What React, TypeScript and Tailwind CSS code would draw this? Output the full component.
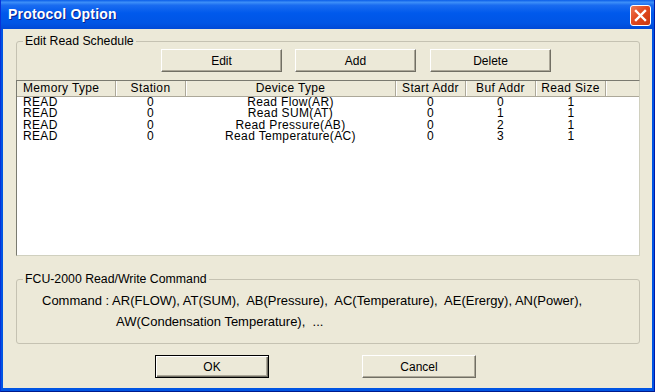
import React from "react";

const font = { fontFamily: '"Liberation Sans", Arial, sans-serif' };

const rows = [
  ["READ", "0", "Read Flow(AR)", "0", "0", "1"],
  ["READ", "0", "Read SUM(AT)", "0", "1", "1"],
  ["READ", "0", "Read Pressure(AB)", "0", "2", "1"],
  ["READ", "0", "Read Temperature(AC)", "0", "3", "1"],
];

const cols = [
  { name: "Memory Type", w: "w-[99px]", align: "text-left pl-[6px]" },
  { name: "Station", w: "w-[70px]", align: "text-center" },
  { name: "Device Type", w: "w-[210px]", align: "text-center" },
  { name: "Start Addr", w: "w-[70px]", align: "text-center" },
  { name: "Buf Addr", w: "w-[70px]", align: "text-center" },
  { name: "Read Size", w: "w-[70px]", align: "text-center" },
];

function Btn({ children, className = "" }: { children: React.ReactNode; className?: string }) {
  return (
    <button
      className={
        "w-[121px] h-[23px] bg-[#ECE9D8] border border-t-white border-l-white border-r-[#716F64] border-b-[#716F64] shadow-[inset_-1px_-1px_0_#ACA899] text-[12px] text-black leading-none " +
        className
      }
    >
      {children}
    </button>
  );
}

export default function App() {
  return (
    <div
      className="w-[655px] h-[392px] flex flex-col bg-[#0054E3] border-l border-l-[#0831D9] border-r border-r-[#0019A8] border-b border-b-[#001A8C]"
      style={font}
    >
      {/* Title bar */}
      <div className="h-[29px] flex items-center justify-between pl-[7px] pr-[3px] bg-[linear-gradient(to_bottom,#0A5DE8_0%,#3D8FF8_8%,#1A6CF0_18%,#0059EC_45%,#0055E5_80%,#0049D6_100%)]">
        <span className="text-white font-bold text-[14px] [text-shadow:1px_1px_0_#0A1E8C] tracking-[0.2px]">
          Protocol Option
        </span>
        <div className="w-[21px] h-[21px] mt-[2px] rounded-[3px] border border-white bg-[linear-gradient(135deg,#EE7A55_0%,#E2491F_45%,#C8380F_100%)] flex items-center justify-center">
          <svg width="13" height="13" viewBox="0 0 13 13">
            <path d="M2 2 L11 11 M11 2 L2 11" stroke="white" strokeWidth="2.4" strokeLinecap="square" />
          </svg>
        </div>
      </div>

      {/* Body */}
      <div className="flex-1 mx-[2px] mb-[3px] bg-[#ECE9D8] flex flex-col px-[13px] pt-[5px]">
        {/* Group 1 */}
        <fieldset className="border border-[#C5C2B2] rounded-[3px] mr-[-1px] flex flex-col">
          <legend className="ml-[6px] px-[2px] text-[12.3px] leading-[14px] text-black">Edit Read Schedule</legend>
          <div className="flex pl-[144px] mt-[1px]">
            <Btn>Edit</Btn>
            <Btn className="ml-[13px]">Add</Btn>
            <Btn className="ml-[14px]">Delete</Btn>
          </div>
          <div className="mt-[8px] -mx-px -mb-px h-[176px] bg-white border border-t-[#7A7A70] border-l-[#7A7A70] border-r-[#D0D0BF] border-b-[#D0D0BF] flex flex-col text-[12px] tracking-[0.35px] text-black">
            <div className="h-[16px] flex bg-[#ECE9D8] border-b border-b-[#ACA899]">
              {cols.map((c) => (
                <div
                  key={c.name}
                  className={`${c.w} ${c.align} h-full leading-[15px] border-r border-r-[#ACA899] shadow-[1px_0_0_white] whitespace-nowrap`}
                >
                  {c.name}
                </div>
              ))}
              <div className="flex-1" />
            </div>
            {rows.map((r, i) => (
              <div key={i} className="flex leading-[11.33px] h-[11.33px]">
                {r.map((v, j) => (
                  <div key={j} className={`${cols[j].w} ${cols[j].align} whitespace-nowrap ${j < 5 ? "pr-px" : ""}`}>
                    {v}
                  </div>
                ))}
              </div>
            ))}
          </div>
        </fieldset>

        {/* Group 2 */}
        <fieldset className="mt-[16px] border border-[#C5C2B2] rounded-[3px] mr-[-1px] pb-[11px]">
          <legend className="ml-[6px] px-[2px] text-[12.3px] leading-[14px] text-black">FCU-2000 Read/Write Command</legend>
          <div className="pt-[4px] text-[13px] leading-[21px] text-black whitespace-pre">
            <div className="pl-[25px]">Command : AR(FLOW), AT(SUM),  AB(Pressure),  AC(Temperature),  AE(Erergy), AN(Power),</div>
            <div className="pl-[99px]">AW(Condensation Temperature),  ...</div>
          </div>
        </fieldset>

        {/* Bottom buttons */}
        <div className="flex mt-[11px] pl-[139px]">
          <button className="w-[114px] h-[23px] bg-[#ECE9D8] border border-black shadow-[inset_1px_1px_0_white,inset_-1px_-1px_0_#716F64,inset_-2px_-2px_0_#ACA899] text-[12px] text-black leading-none">
            OK
          </button>
          <Btn className="ml-[93px] !w-[114px]">Cancel</Btn>
        </div>
      </div>
    </div>
  );
}
